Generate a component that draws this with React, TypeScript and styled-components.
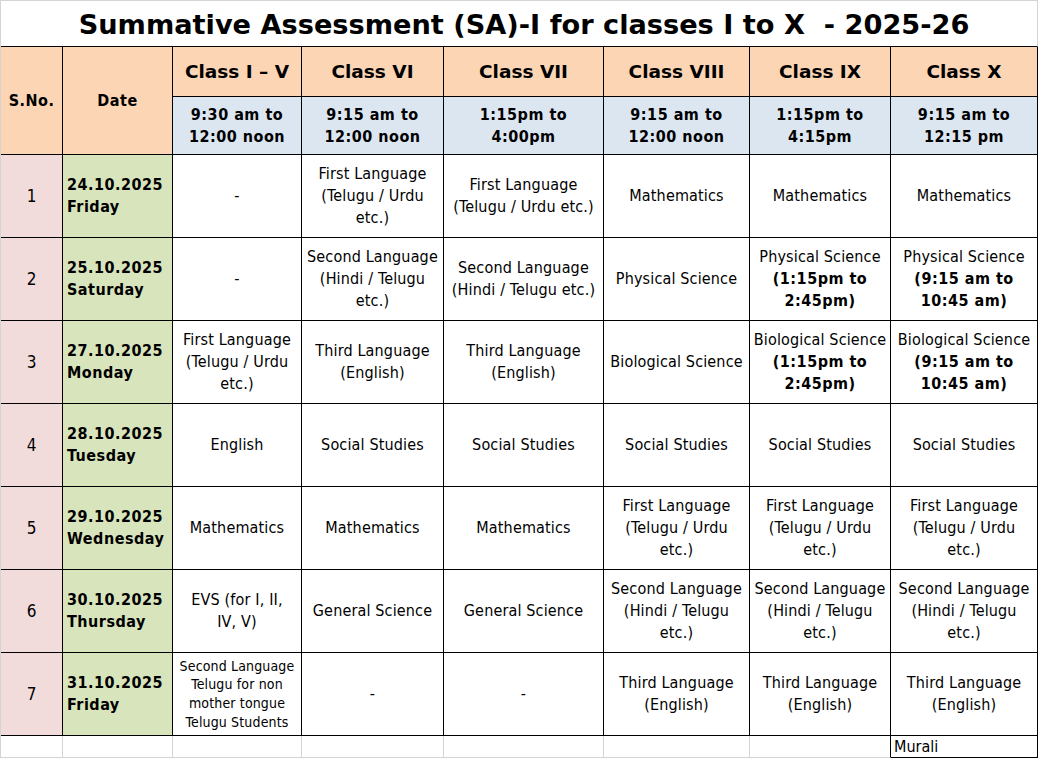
import React from 'react'
import styled, { createGlobalStyle } from 'styled-components'

type Subject = string | { text: string; note: string }

type Row = {
  no: number
  date: string
  day: string
  cells: Subject[]
  smallFirst?: boolean
}

const FIRST_LANG = 'First Language\n(Telugu / Urdu\netc.)'
const SECOND_LANG = 'Second Language\n(Hindi / Telugu\netc.)'
const THIRD_LANG = 'Third Language\n(English)'

const classes = [
  { name: 'Class I \u2013 V', time: '9:30 am to\n12:00 noon' },
  { name: 'Class VI', time: '9:15 am to\n12:00 noon' },
  { name: 'Class VII', time: '1:15pm to\n4:00pm' },
  { name: 'Class VIII', time: '9:15 am to\n12:00 noon' },
  { name: 'Class IX', time: '1:15pm to\n4:15pm' },
  { name: 'Class X', time: '9:15 am to\n12:15 pm' },
]

const rows: Row[] = [
  {
    no: 1,
    date: '24.10.2025',
    day: 'Friday',
    cells: ['-', FIRST_LANG, 'First Language\n(Telugu / Urdu etc.)', 'Mathematics', 'Mathematics', 'Mathematics'],
  },
  {
    no: 2,
    date: '25.10.2025',
    day: 'Saturday',
    cells: [
      '-',
      SECOND_LANG,
      'Second Language\n(Hindi / Telugu etc.)',
      'Physical Science',
      { text: 'Physical Science', note: '(1:15pm to\n2:45pm)' },
      { text: 'Physical Science', note: '(9:15 am to\n10:45 am)' },
    ],
  },
  {
    no: 3,
    date: '27.10.2025',
    day: 'Monday',
    cells: [
      FIRST_LANG,
      THIRD_LANG,
      THIRD_LANG,
      'Biological Science',
      { text: 'Biological Science', note: '(1:15pm to\n2:45pm)' },
      { text: 'Biological Science', note: '(9:15 am to\n10:45 am)' },
    ],
  },
  {
    no: 4,
    date: '28.10.2025',
    day: 'Tuesday',
    cells: ['English', 'Social Studies', 'Social Studies', 'Social Studies', 'Social Studies', 'Social Studies'],
  },
  {
    no: 5,
    date: '29.10.2025',
    day: 'Wednesday',
    cells: ['Mathematics', 'Mathematics', 'Mathematics', FIRST_LANG, FIRST_LANG, FIRST_LANG],
  },
  {
    no: 6,
    date: '30.10.2025',
    day: 'Thursday',
    cells: ['EVS (for I, II,\nIV, V)', 'General Science', 'General Science', SECOND_LANG, SECOND_LANG, SECOND_LANG],
  },
  {
    no: 7,
    date: '31.10.2025',
    day: 'Friday',
    smallFirst: true,
    cells: ['Second Language\nTelugu for non\nmother tongue\nTelugu Students', '-', '-', THIRD_LANG, THIRD_LANG, THIRD_LANG],
  },
]

const colWidths = [62, 110, 129, 142, 160, 146, 141, 147]

export default function App() {
  return (
    <>
      <GlobalStyle />
      <Sheet>
        <colgroup>
          {colWidths.map((w, i) => (
            <col key={i} style={{ width: w }} />
          ))}
        </colgroup>
        <tbody>
          <tr>
            <TitleCell colSpan={8}>Summative Assessment (SA)-I for classes I to X  - 2025-26</TitleCell>
          </tr>
          <tr>
            <HeadCell rowSpan={2} $tone="peach">S.No.</HeadCell>
            <HeadCell rowSpan={2} $tone="peach">Date</HeadCell>
            {classes.map(c => (
              <ClassCell key={c.name}>{c.name}</ClassCell>
            ))}
          </tr>
          <tr>
            {classes.map(c => (
              <HeadCell key={c.name} $tone="blue" $tall>
                {c.time}
              </HeadCell>
            ))}
          </tr>
          {rows.map(r => (
            <tr key={r.no}>
              <NoCell>{r.no}</NoCell>
              <DateCell>
                {r.date}
                <br />
                {r.day}
              </DateCell>
              {r.cells.map((c, i) => (
                <SubjectCell key={i} $small={r.smallFirst && i === 0}>
                  {typeof c === 'string' ? (
                    c
                  ) : (
                    <>
                      {c.text}
                      <br />
                      <Note>{c.note}</Note>
                    </>
                  )}
                </SubjectCell>
              ))}
            </tr>
          ))}
          <tr>
            {colWidths.map((_, i) =>
              i === 7 ? <SignCell key={i}>Murali</SignCell> : <BlankCell key={i} $blackRight={i === 6} />
            )}
          </tr>
        </tbody>
      </Sheet>
    </>
  )
}

const GlobalStyle = createGlobalStyle`
  html, body {
    margin: 0;
    padding: 0;
    background: #ffffff;
  }
  body {
    font-family: "DejaVu Sans Condensed", "DejaVu Sans", Tahoma, sans-serif;
    color: #000;
  }
`

const Sheet = styled.table`
  table-layout: fixed;
  border-collapse: separate;
  border-spacing: 0;
  width: 1038px;
  border-top: 1px solid #d4d4d4;
  border-left: 1px solid #d4d4d4;

  td {
    box-sizing: border-box;
    padding: 0;
    vertical-align: middle;
    border-right: 1px solid #000;
    border-bottom: 1px solid #000;
  }
`

const TitleCell = styled.td`
  height: 46px;
  text-align: center;
  font-family: "DejaVu Sans", Verdana, sans-serif;
  font-size: 27.2px;
  font-weight: 700;
  white-space: pre;
  padding-left: 10px !important;
  padding-top: 2px !important;
  &&& {
    border-right-color: #d4d4d4;
  }
`

const HeadCell = styled.td<{ $tone: 'peach' | 'blue'; $tall?: boolean }>`
  height: ${p => (p.$tall ? '58px' : '50px')};
  background: ${p => (p.$tone === 'peach' ? '#fcd5b4' : '#dce6f1')};
  text-align: center;
  font-size: 16px;
  line-height: 22px;
  letter-spacing: 0.5px;
  font-weight: 700;
  white-space: pre-line;
`

const ClassCell = styled.td`
  height: 50px;
  background: #fcd5b4;
  text-align: center;
  font-family: "DejaVu Sans", Verdana, sans-serif;
  font-size: 18.5px;
  font-weight: 700;
`

const NoCell = styled.td`
  height: 83px;
  background: #f2dcdb;
  text-align: center;
  font-size: 17px;
`

const DateCell = styled.td`
  background: #d8e4bc;
  padding-left: 4px !important;
  font-size: 16px;
  line-height: 22px;
  letter-spacing: 0.5px;
  font-weight: 700;
`

const SubjectCell = styled.td<{ $small?: boolean }>`
  text-align: center;
  font-size: ${p => (p.$small ? '14px' : '16px')};
  line-height: ${p => (p.$small ? '18.7px' : '22px')};
  letter-spacing: 0.15px;
  white-space: pre-line;
`

const Note = styled.span`
  font-weight: 700;
  letter-spacing: 0.5px;
`

const BlankCell = styled.td<{ $blackRight?: boolean }>`
  height: 22px;
  &&& {
    border-right-color: ${p => (p.$blackRight ? '#000' : '#d4d4d4')};
    border-bottom-color: #d4d4d4;
  }
`

const SignCell = styled.td`
  height: 22px;
  font-size: 16px;
  padding-left: 3px !important;
  text-align: left;
`
